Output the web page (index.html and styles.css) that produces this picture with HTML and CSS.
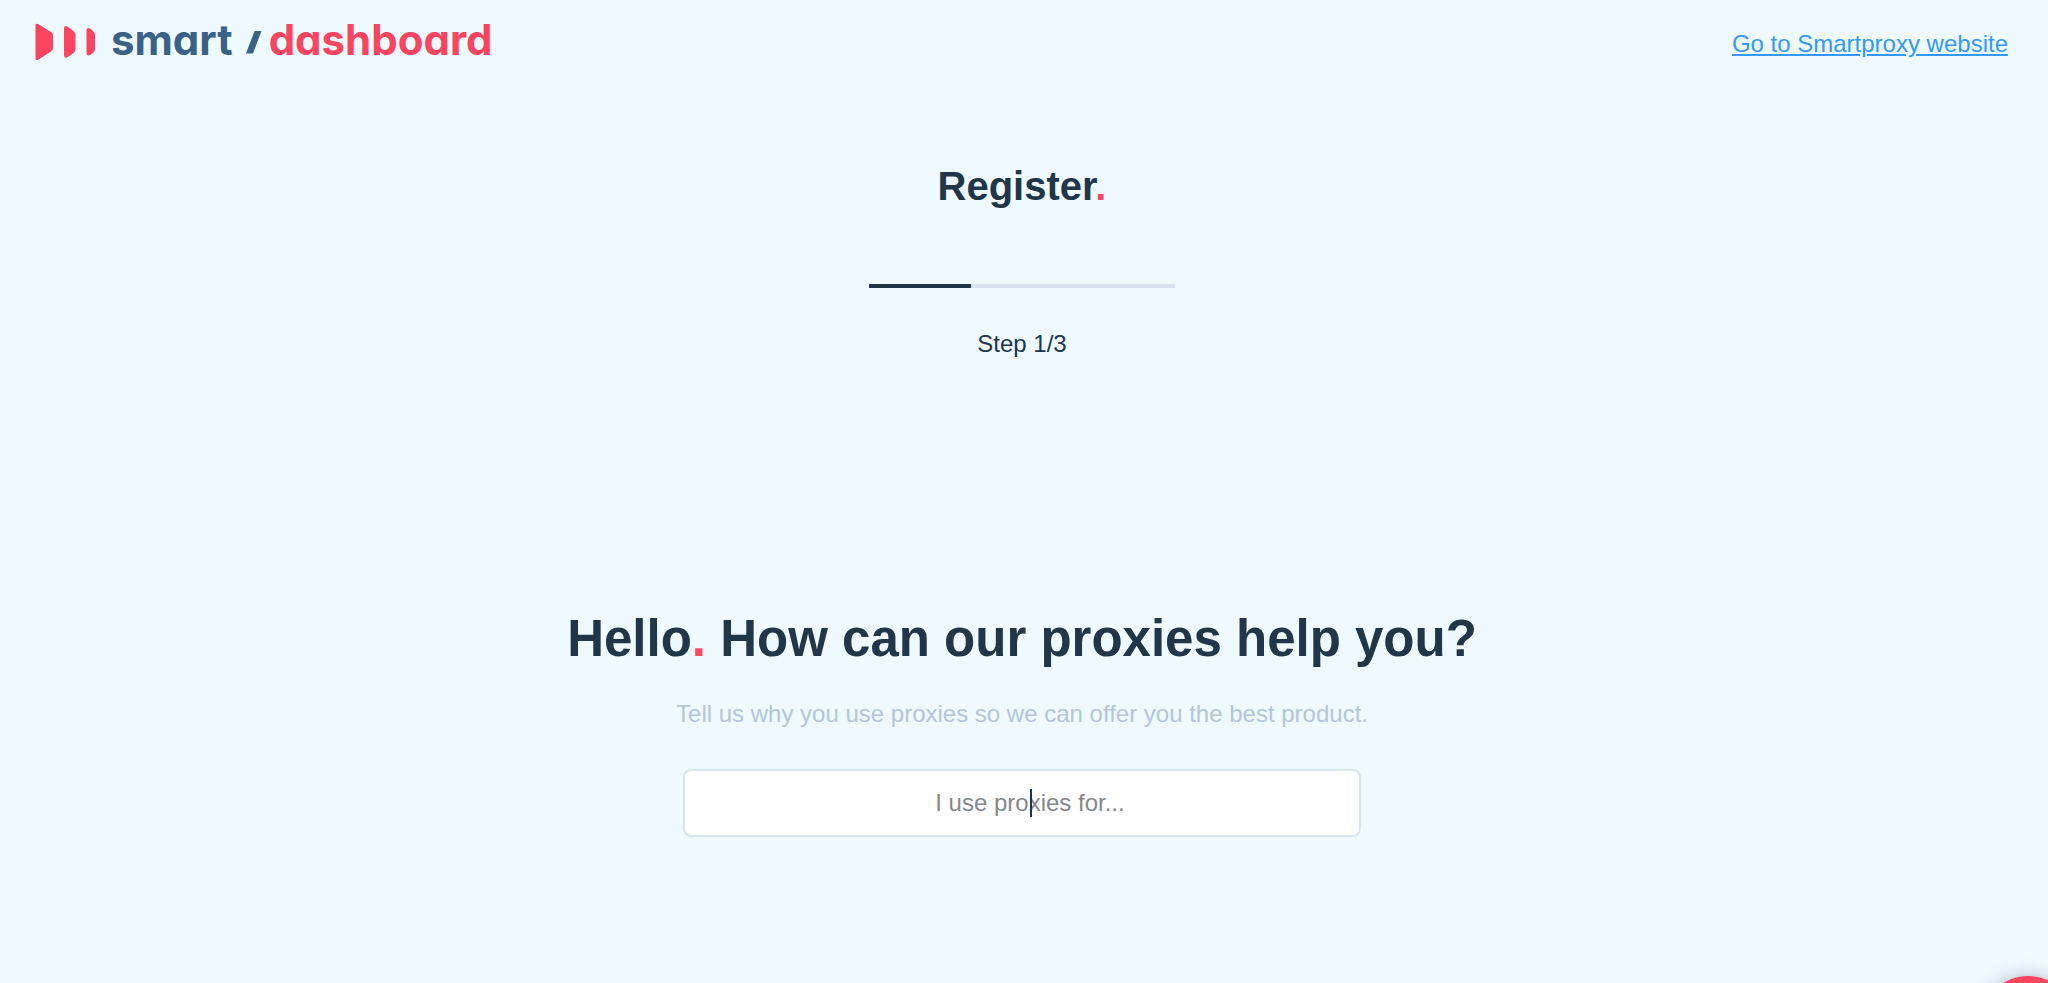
FILE: index.html
```html
<!DOCTYPE html>
<html lang="en">
<head>
<meta charset="utf-8">
<title>Register</title>
<link rel="stylesheet" href="styles.css">
</head>
<body>
<header class="header">
  <div class="logo">
    <svg class="logo-mark" width="62" height="40" viewBox="0 0 62 40" aria-hidden="true">
      <g fill="#f9455f">
        <path d="M1.500 3.500Q1.500 1 4 2L17 10Q19 11 19 13V26Q19 28 17 29.500L4.500 37.500Q1.500 39 1.500 36.500Z"/>
        <path d="M30 7Q30 2.500 33.500 4.500L39.500 9Q41.500 10.500 41.500 13V27Q41.500 29 39.500 31L34 35Q30 37 30 33Z"/>
        <path d="M52.500 9Q52.500 5 56 6.500L59 9Q61 10.500 61 13V27Q61 29 59 31L56 33Q52.500 34.500 52.500 31Z"/>
      </g>
    </svg>
    <span class="logo-brand">smart</span>
    <svg class="logo-slash" width="18" height="24" viewBox="0 0 18 24" aria-hidden="true">
      <path d="M9.500 0H16.500L8 22.500H1Z" fill="#3a6186"/>
    </svg>
    <span class="logo-product">dashboard</span>
  </div>
  <a class="site-link" href="#">Go to Smartproxy website</a>
</header>
<main class="main">
  <h2 class="title">Register<span class="dot">.</span></h2>
  <div class="progress"><div class="progress-bar"></div></div>
  <p class="step">Step 1/3</p>
  <h1 class="question">Hello<span class="dot">.</span> How can our proxies help you?</h1>
  <label class="hint" for="usage">Tell us why you use proxies so we can offer you the best product.</label>
  <div class="field">
    <input class="input" id="usage" type="text" placeholder="I use proxies for...">
    <span class="caret"></span>
  </div>
</main>
<button class="chat" type="button" aria-label="Open chat"></button>
</body>
</html>
```
FILE: styles.css
```css
* { box-sizing: border-box; }
body {
  margin: 0;
  min-height: 100vh;
  background: #eefaff;
  color: #22364a;
  font-family: "Liberation Sans", Arial, sans-serif;
  font-size: 24px;
  line-height: 32px;
}
.header {
  display: flex;
  justify-content: space-between;
  align-items: flex-start;
  padding: 20px 40px 0 34px;
}
.logo {
  display: flex;
  align-items: center;
  height: 40px;
  font-family: Inter, sans-serif;
  font-size: 42px;
  font-weight: 700;
  line-height: 40px;
  font-feature-settings: "cv11";
}
.logo-mark { margin: 4px 15px 0 0; }
.logo-brand { color: #3a6186; }
.logo-slash { margin: 6px 6px 0 12px; }
.logo-product { color: #f9455f; }
.site-link {
  padding-top: 8px;
  color: #3399ff;
  text-decoration: underline;
}
.main {
  display: flex;
  flex-direction: column;
  align-items: center;
  padding: 102px 4px 0 0;
}
.title {
  margin: 0;
  font-size: 40px;
  line-height: 48px;
}
.dot { color: #ff4760; }
.progress {
  width: 306px;
  height: 4px;
  margin: 74px 0 40px;
  background: #d7e3ee;
}
.progress-bar {
  width: 33.333%;
  height: 100%;
  background: #22364a;
}
.step { margin: 0; }
.question {
  margin: 247px 0 27px;
  font-size: 51px;
  line-height: 64px;
}
.hint { color: #b5c5d9; }
.field {
  position: relative;
  width: 678px;
  max-width: 100%;
  margin-top: 39px;
}
.input {
  display: block;
  width: 100%;
  height: 68px;
  padding: 0 8px 0 24px;
  border: 2px solid #d9e5ef;
  border-radius: 8px;
  background: #fff;
  color: #22364a;
  font: inherit;
  text-align: center;
}
.input::placeholder { color: #85878c; opacity: 1; }
.caret {
  position: absolute;
  top: 20px;
  left: 347px;
  width: 2px;
  height: 28px;
  background: #22364a;
}
.chat {
  position: fixed;
  right: -28px;
  bottom: -89px;
  width: 96px;
  height: 96px;
  border: 0;
  border-radius: 50%;
  background: #f9455f;
  box-shadow: 0 2px 20px rgba(0, 0, 0, 0.3);
}
```
